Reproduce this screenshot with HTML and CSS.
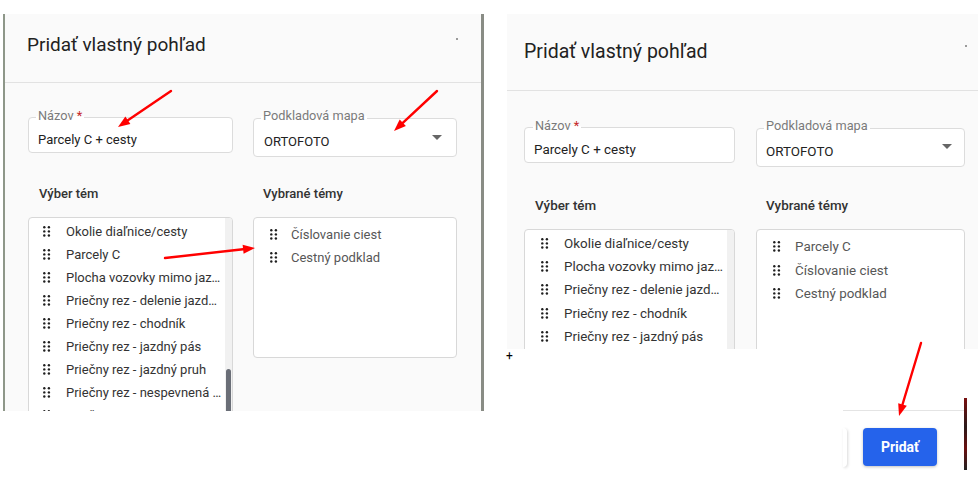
FILE: index.html
```html
<!DOCTYPE html>
<html lang="sk">
<head>
  <meta charset="UTF-8" />
  <meta name="viewport" content="width=device-width, initial-scale=1.0"/>
  <title>Pridať vlastný pohľad</title>
  <link rel="stylesheet" href="styles.css">
</head>
<body>

  <svg class="sprite" aria-hidden="true">
    <symbol id="grip" viewBox="0 0 8 11">
      <circle cx="1.3" cy="1.3" r="1.2"/><circle cx="5.9" cy="1.3" r="1.2"/>
      <circle cx="1.3" cy="5.4" r="1.2"/><circle cx="5.9" cy="5.4" r="1.2"/>
      <circle cx="1.3" cy="9.5" r="1.2"/><circle cx="5.9" cy="9.5" r="1.2"/>
    </symbol>
  </svg>

  <div class="board">

    <!-- first capture: list scrolled down, two themes picked -->
    <section class="shot shot-a">
      <header class="dialog-head">
        <h2>Pridať vlastný pohľad</h2>
        <span class="close-dot"></span>
      </header>
      <div class="dialog-body">
        <div class="fields">
          <div class="field field-name">
            <span class="field-label">Názov <b>*</b></span>
            <span class="field-value">Parcely C + cesty</span>
          </div>
          <div class="field field-select">
            <span class="field-label">Podkladová mapa</span>
            <span class="field-value">ORTOFOTO</span>
            <span class="caret"></span>
          </div>
        </div>
        <div class="columns">
          <div class="col">
            <h3>Výber tém</h3>
            <ul class="list list-source">
              <li><svg class="grip"><use href="#grip"/></svg><span>Okolie diaľnice/cesty</span></li>
              <li><svg class="grip"><use href="#grip"/></svg><span>Parcely C</span></li>
              <li><svg class="grip"><use href="#grip"/></svg><span>Plocha vozovky mimo jazdného pásu</span></li>
              <li><svg class="grip"><use href="#grip"/></svg><span>Priečny rez - delenie jazdného pásu</span></li>
              <li><svg class="grip"><use href="#grip"/></svg><span>Priečny rez - chodník</span></li>
              <li><svg class="grip"><use href="#grip"/></svg><span>Priečny rez - jazdný pás</span></li>
              <li><svg class="grip"><use href="#grip"/></svg><span>Priečny rez - jazdný pruh</span></li>
              <li><svg class="grip"><use href="#grip"/></svg><span>Priečny rez - nespevnená krajnica</span></li>
              <li><svg class="grip"><use href="#grip"/></svg><span>Priečny rez - neoportizované</span></li>
              <div class="scroll-track"><div class="scroll-thumb"></div></div>
            </ul>
          </div>
          <div class="col">
            <h3>Vybrané témy</h3>
            <ul class="list list-target">
              <li><svg class="grip"><use href="#grip"/></svg><span>Číslovanie ciest</span></li>
              <li><svg class="grip"><use href="#grip"/></svg><span>Cestný podklad</span></li>
            </ul>
          </div>
        </div>
      </div>
      <div class="edge-marks"></div>
    </section>

    <!-- second capture: Parcely C moved over -->
    <section class="shot shot-b">
      <header class="dialog-head">
        <h2>Pridať vlastný pohľad</h2>
        <span class="close-dot"></span>
      </header>
      <div class="dialog-body">
        <div class="fields">
          <div class="field field-name">
            <span class="field-label">Názov <b>*</b></span>
            <span class="field-value">Parcely C + cesty</span>
          </div>
          <div class="field field-select">
            <span class="field-label">Podkladová mapa</span>
            <span class="field-value">ORTOFOTO</span>
            <span class="caret"></span>
          </div>
        </div>
        <div class="columns">
          <div class="col">
            <h3>Výber tém</h3>
            <ul class="list list-source">
              <li><svg class="grip"><use href="#grip"/></svg><span>Okolie diaľnice/cesty</span></li>
              <li><svg class="grip"><use href="#grip"/></svg><span>Plocha vozovky mimo jazdného pásu</span></li>
              <li><svg class="grip"><use href="#grip"/></svg><span>Priečny rez - delenie jazdného pásu</span></li>
              <li><svg class="grip"><use href="#grip"/></svg><span>Priečny rez - chodník</span></li>
              <li><svg class="grip"><use href="#grip"/></svg><span>Priečny rez - jazdný pás</span></li>
              <li><svg class="grip"><use href="#grip"/></svg><span>Priečny rez - jazdný pruh</span></li>
              <div class="scroll-track"></div>
            </ul>
          </div>
          <div class="col">
            <h3>Vybrané témy</h3>
            <ul class="list list-target">
              <li><svg class="grip"><use href="#grip"/></svg><span>Parcely C</span></li>
              <li><svg class="grip"><use href="#grip"/></svg><span>Číslovanie ciest</span></li>
              <li><svg class="grip"><use href="#grip"/></svg><span>Cestný podklad</span></li>
            </ul>
          </div>
        </div>
      </div>
    </section>

    <!-- footer crop with the submit button -->
    <div class="shot shot-c">
      <span class="btn-cancel"></span>
      <button class="btn-primary">Pridať</button>
    </div>
    <div class="dark-strip"></div>

    <span class="cursor">+</span>

    <svg class="arrows" width="978" height="489" viewBox="0 0 978 489">
      <g stroke="#f00" stroke-width="2.4" stroke-linecap="round">
        <line x1="171" y1="91" x2="127.9" y2="120.3"/>
        <line x1="437" y1="91" x2="402.8" y2="122.8"/>
        <line x1="165" y1="258" x2="243.1" y2="249.3"/>
        <line x1="921" y1="343" x2="902.5" y2="404.5"/>
      </g>
      <g fill="#f00">
        <polygon points="118,127 125.4,116.6 130.4,124"/>
        <polygon points="394,131 399.7,119.5 405.9,126.1"/>
        <polygon points="255,248 243.6,253.8 242.6,244.8"/>
        <polygon points="899,416 898.2,403.2 906.8,405.8"/>
      </g>
    </svg>

  </div>

</body>
</html>
```

FILE: styles.css
```css
* {
  box-sizing: border-box;
}

body {
  margin: 0;
  background: #fff;
  font-family: Roboto, "Noto Sans", Arial, sans-serif;
  color: #212121;
}

.sprite {
  width: 0;
  height: 0;
  position: absolute;
}

.board {
  position: relative;
  width: 978px;
  height: 489px;
  overflow: hidden;
}

/* each crop sits on the collage where it was pasted */
.shot {
  position: absolute;
  overflow: hidden;
  background: #fafafa;
}

.shot-a {
  left: 3px;
  top: 14px;
  width: 481px;
  height: 397px;
  border-left: 2px solid #8e9789;
  border-right: 3px solid #898c85;
}

.shot-b {
  left: 507px;
  top: 14px;
  width: 471px;
  height: 335px;
}

.dialog-head {
  display: flex;
  justify-content: space-between;
  align-items: center;
  height: 69px;
  padding: 0 23px 8px 22px;
  border-bottom: 1px solid #e2e2e2;
}

.dialog-head h2 {
  margin: 0;
  font-size: 19px;
  font-weight: 400;
  line-height: 1;
  color: #222;
}

.close-dot {
  align-self: flex-start;
  margin-top: 24px;
  width: 2px;
  height: 2px;
  background: #9a9a9a;
}

.dialog-body {
  padding: 34px 24px 0 23px;
}

.fields,
.columns {
  display: grid;
  grid-template-columns: 205px 204px;
  column-gap: 20px;
  align-items: start;
}

.field {
  position: relative;
  display: flex;
  align-items: center;
  background: #fff;
  border: 1px solid #dcdcdc;
  border-radius: 4px;
}

.field-name {
  height: 36px;
  padding: 8px 0 0 9px;
}

.field-select {
  height: 39px;
  margin-top: 1px;
  padding: 7px 0 0 10px;
}

.field-label {
  position: absolute;
  top: -9px;
  left: 7px;
  padding: 0 2px;
  font-size: 12.75px;
  line-height: 14px;
  color: #7a7a7a;
  background: linear-gradient(#fafafa 50%, #fff 50%);
}

.field-select .field-label {
  top: -10px;
}

.field-label b {
  font-weight: 400;
  color: #c62828;
}

.field-value {
  font-size: 13px;
  color: #222;
}

.caret {
  align-self: flex-start;
  margin: 9px 14px 0 auto;
  width: 0;
  height: 0;
  border-left: 5px solid transparent;
  border-right: 5px solid transparent;
  border-top: 5px solid #666;
}

.columns h3 {
  margin: 29px 0 15px;
  padding-left: 11px;
  font-size: 13px;
  font-weight: 500;
  line-height: 16px;
  color: #333;
}

.columns .col + .col h3 {
  padding-left: 10px;
}

.list {
  position: relative;
  margin: 0;
  padding: 0;
  list-style: none;
  overflow: hidden;
  background: #fff;
  border: 1px solid #d8d8d8;
  border-radius: 4px;
}

.list li {
  display: flex;
  align-items: center;
  height: 23px;
  font-size: 13px;
}

.list li span {
  flex: 1;
  min-width: 0;
  overflow: hidden;
  white-space: nowrap;
  text-overflow: ellipsis;
}

.grip {
  flex: none;
  width: 8px;
  height: 11px;
  fill: #1f1f1f;
}

.list-source {
  height: 230px;
  padding-top: 2px;
}

.list-source li {
  padding: 0 10px 0 14px;
  color: #333;
}

.list-source .grip {
  margin-right: 15px;
}

.list-target {
  height: 141px;
  padding-top: 5px;
}

.list-target li {
  padding-left: 16px;
  color: #575757;
}

.list-target .grip {
  margin-right: 13px;
}

.scroll-track {
  position: absolute;
  top: 0;
  right: 0;
  bottom: 0;
  width: 7px;
  background: #f1f1f1;
}

.scroll-thumb {
  margin: 151px 1px 0 1px;
  height: 60px;
  border-radius: 3px;
  background: #6a6e77;
}

.edge-marks {
  position: absolute;
  top: 0;
  right: -3px;
  width: 3px;
  height: 100%;
  background: linear-gradient(
    transparent 189px, #9c1515 189px, #9c1515 198px,
    transparent 198px, transparent 211px, #9c1515 211px, #9c1515 224px,
    transparent 224px, transparent 269px, #3a3a3a 269px, #3a3a3a 272px,
    #9c1515 272px, #9c1515 293px, transparent 293px, transparent 298px,
    #9c1515 298px, #9c1515 309px, transparent 309px, transparent 321px,
    #9c1515 321px, #9c1515 329px, transparent 329px
  );
}

/* second capture came out a touch wider */
.shot-b .dialog-head {
  height: 77px;
  padding: 0 11px 0 17px;
}

.shot-b .dialog-head h2 {
  font-size: 19.5px;
}

.shot-b .close-dot {
  margin-top: 31px;
}

.shot-b .dialog-body {
  padding: 36px 0 0 17px;
}

.shot-b .fields,
.shot-b .columns {
  grid-template-columns: 211px 209px;
  column-gap: 21px;
}

.shot-b .field-value,
.shot-b .list li {
  font-size: 13.4px;
}

.shot-b .field-select {
  padding-left: 9px;
}

.shot-b .field-name .field-label {
  left: 8px;
}

.shot-b .caret {
  margin: 8px 12px 0 auto;
}

.shot-b .columns h3 {
  margin: 31px 0 15px;
  font-size: 13.4px;
}

.shot-b .list li {
  height: 23.4px;
}

.shot-b .list-source {
  padding-top: 1.5px;
}

.shot-b .list-source li {
  padding: 0 11px 0 16px;
}

.shot-b .list-target li {
  padding-left: 16px;
}

.shot-b .list-target .grip {
  margin-right: 14px;
}

.shot-c {
  left: 843px;
  top: 410px;
  width: 122px;
  height: 67px;
  display: flex;
  gap: 16px;
  padding-top: 17px;
  background: #fff;
  border-top: 1px solid #e4e4e4;
  overflow: visible;
}

.btn-cancel {
  width: 4px;
  height: 39px;
  background: #fff;
  border-radius: 0 4px 4px 0;
  box-shadow: 1px 1px 3px rgba(0, 0, 0, 0.15);
}

.btn-primary {
  width: 74px;
  height: 38px;
  border: none;
  border-radius: 4px;
  background: #2563eb;
  color: #fff;
  font-family: inherit;
  font-size: 14px;
  font-weight: 700;
  box-shadow: 0 1px 3px rgba(0, 0, 0, 0.25);
}

.dark-strip {
  position: absolute;
  left: 964px;
  top: 398px;
  width: 3px;
  height: 72px;
  background: linear-gradient(#7a1010, #2a1a1a 40%, #6b0f0f 70%, #222);
}

.cursor {
  position: absolute;
  left: 506px;
  top: 349px;
  font-size: 12px;
  line-height: 14px;
  color: #000;
}

.arrows {
  position: absolute;
  top: 0;
  left: 0;
  pointer-events: none;
}
```
